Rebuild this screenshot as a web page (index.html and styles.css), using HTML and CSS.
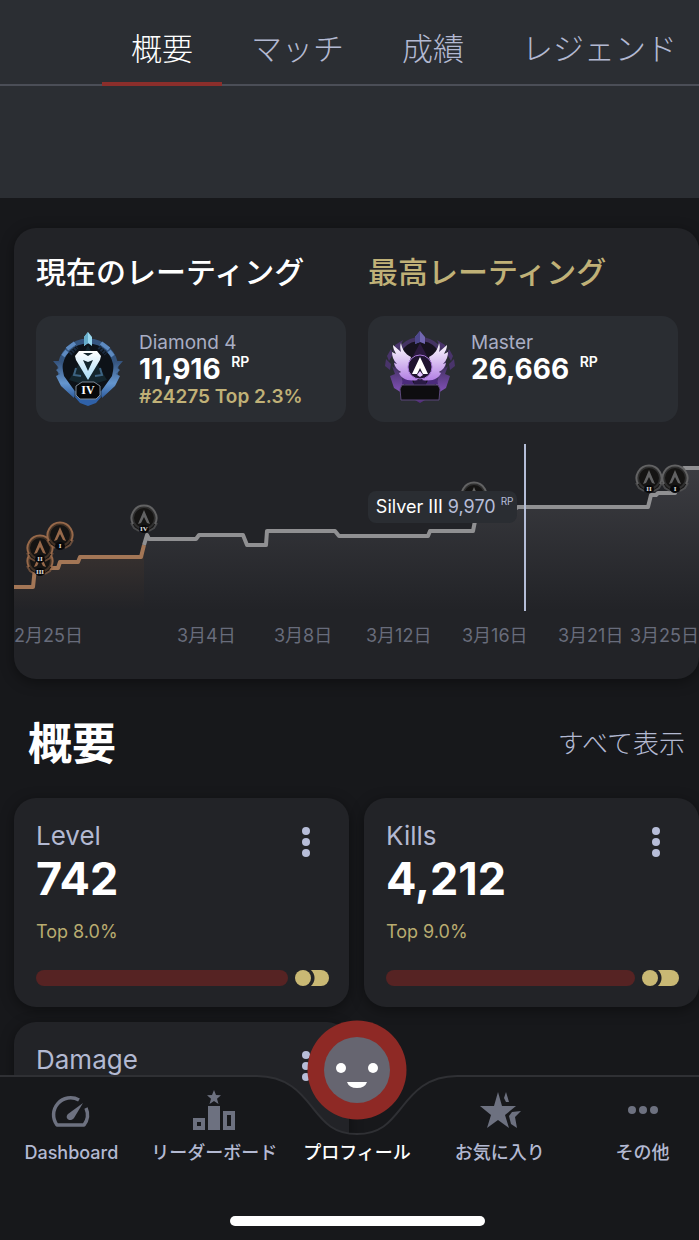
FILE: index.html
```
<!DOCTYPE html>
<html lang="ja">
<head>
<meta charset="utf-8">
<meta name="viewport" content="width=device-width, initial-scale=1">
<title>概要</title>
<link rel="stylesheet" href="styles.css">
</head>
<body>
<div class="app">
  <header class="top">
    <nav class="tabs">
      <a class="tab tab-active" href="#overview">概要</a>
      <a class="tab" href="#matches">マッチ</a>
      <a class="tab" href="#performance">成績</a>
      <a class="tab" href="#legends">レジェンド</a>
    </nav>
  </header>

  <main class="content">
    <section class="card rating">
      <div class="rating-grid">
        <div>
          <h2 class="rating-title">現在のレーティング</h2>
          <div class="rank">
            <svg class="emblem" viewBox="0 0 72 76" aria-hidden="true">
              <defs>
                <linearGradient id="dia" x1="0" y1="0" x2="0" y2="1"><stop offset="0" stop-color="#34527c"/><stop offset=".6" stop-color="#6596ce"/><stop offset="1" stop-color="#2e5da0"/></linearGradient>
                <linearGradient id="gem" x1="0" y1="0" x2="0" y2="1"><stop offset="0" stop-color="#fff"/><stop offset="1" stop-color="#a9dcf8"/></linearGradient>
              </defs>
              <circle cx="36" cy="39" r="28" fill="#0d1218" stroke="#34557f" stroke-width="5"/>
              <path d="M15 19l8-6M49 13l8 6M11 26l4-5M57 21l4 5" stroke="#5d8ac0" stroke-width="4"/>
              <path d="M18 24l7-7M47 17l7 7" stroke="#1b2b3f" stroke-width="4" stroke-dasharray="2 1"/>
              <path d="M1 31h8l3 15 10 14v8L9 56 4 46l4-2-4-4 3-2zM71 31h-8l-3 15-10 14v8l13-12 5-10-4-2 4-4-3-2z" fill="url(#dia)"/>
              <path d="M22 66l9 3h10l9-3-6 7-8 3-8-3z" fill="#2f61a8"/>
              <path d="M36 15l-8 17-11 18 13 4h12l13-4-11-18z" fill="#14262e"/>
              <path d="M24 38l-2 7 7 1M48 38l2 7-7 1" fill="none" stroke="#3d6483" stroke-width="2"/>
              <path fill-rule="evenodd" d="M27 21h18l4 5-1 4-12 20-12-20-1-4zM31 30l5 11 5-11-5 2zM31 23l5 3 5-3z" fill="url(#gem)"/>
              <path d="M36 2l4 5v9l-4-3-4 3V7z" fill="#9ad8ee"/>
              <path d="M36 2v11l-4 3V7z" fill="#67aecb"/>
              <path d="M30 52h12l6 4v9l-4 4H28l-4-4v-9z" fill="#060708" stroke="#7d8996" stroke-width="1"/>
              <text class="emblem-text" x="36" y="64" text-anchor="middle">IV</text>
            </svg>
            <div class="rank-text">
              <span class="rank-name">Diamond 4</span>
              <strong class="rank-value">11,916 <sup class="unit">RP</sup></strong>
              <span class="rank-place">#24275 Top 2.3%</span>
            </div>
          </div>
        </div>
        <div>
          <h2 class="rating-title rating-title-best">最高レーティング</h2>
          <div class="rank">
            <svg class="emblem" viewBox="0 0 72 76" aria-hidden="true">
              <defs>
                <linearGradient id="wing" x1="0" y1="0" x2="0" y2="1"><stop offset="0" stop-color="#fff"/><stop offset="1" stop-color="#b27fe4"/></linearGradient>
                <linearGradient id="pur" x1="0" y1="0" x2="0" y2="1"><stop offset="0" stop-color="#423062"/><stop offset="1" stop-color="#8452bb"/></linearGradient>
              </defs>
              <circle cx="36" cy="33" r="24" fill="#17131f" stroke="#443363" stroke-width="4"/>
              <path d="M19 10l-8 5-2 7 7-5zM7 19l-4 7 2 5 4-7zM2 29l-1 7 5 4 1-6zM53 10l8 5 2 7-7-5zM65 19l4 7-2 5-4-7zM70 29l1 7-5 4-1-6z" fill="#49346b"/>
              <path d="M8 36l8 7 4 12-2 8-8-5-4-12 5-2zM64 36l-8 7-4 12 2 8 8-5 4-12-5-2z" fill="url(#pur)"/>
              <path d="M19 49l6-4 5 9H18zM53 49l-6-4-5 9h12z" fill="#4b2b7c"/>
              <path d="M30 50h12v6H30z" fill="#2a1a45"/>
              <path d="M17 13C18 19 21 24 27 27C24 35 26 43 34 50C23 52 17 48 15 43L17 42C13 40 11 37 10 33L13 34C9 30 8 26 8 22L12 24C10 20 9 18 9 15L17 22C16 18 16 16 17 13z" fill="url(#wing)"/>
              <path d="M55 13C54 19 51 24 45 27C48 35 46 43 38 50C49 52 55 48 57 43L55 42C59 40 61 37 62 33L59 34C63 30 64 26 64 22L60 24C62 20 63 18 63 15L55 22C56 18 56 16 55 13z" fill="url(#wing)"/>
              <path d="M36 13l-7 13h14z" fill="#2c1a40"/>
              <circle cx="36" cy="37" r="12" fill="#1f1430" stroke="#a878d8" stroke-width="1"/>
              <path d="M36 27l8 17h-5l-3-6-3 6h-5z" fill="#fff"/>
              <path d="M33 45l3-4 3 4-3 2z" fill="#e3c5ff"/>
              <path d="M36 1l5 6v7l-5-2-5 2V7z" fill="#7267b2"/><path d="M36 1v11l-5 2V7z" fill="#4d478c"/>
              <path d="M31 70h10l-5 3z" fill="#542d7e"/>
              <path d="M18 55h36l2 4-1 11H17l-1-11z" fill="#0e0d10" stroke="#5b477a" stroke-width="1"/>
            </svg>
            <div class="rank-text">
              <span class="rank-name">Master</span>
              <strong class="rank-value">26,666 <sup class="unit">RP</sup></strong>
            </div>
          </div>
        </div>
      </div>

      <div class="chart">
        <svg class="chart-svg" viewBox="14 436 685 220" role="img" aria-label="RP">
          <defs>
            <linearGradient id="areaS" gradientUnits="userSpaceOnUse" x1="0" y1="467" x2="0" y2="610"><stop offset="0" stop-color="#8e8e96" stop-opacity=".24"/><stop offset="1" stop-color="#8e8e96" stop-opacity="0"/></linearGradient>
            <linearGradient id="areaB" gradientUnits="userSpaceOnUse" x1="0" y1="550" x2="0" y2="610"><stop offset="0" stop-color="#a6795a" stop-opacity=".17"/><stop offset="1" stop-color="#a6795a" stop-opacity="0"/></linearGradient>
            <symbol id="medal" viewBox="0 0 30 30">
              <circle cx="15" cy="14" r="13" fill="#151413"/>
              <circle cx="15" cy="14" r="11" fill="none" stroke="currentColor" stroke-opacity=".35" stroke-width="2"/>
              <path d="M4 20A12.500 12.500 0 1 1 26 20" fill="none" stroke="currentColor" stroke-width="2"/>
              <path d="M2 19l3 5 5 3M28 19l-3 5-5 3" fill="none" stroke="currentColor" stroke-opacity=".6" stroke-width="2"/>
              <path d="M15 6l6 14-3-1-3-6-3 6-3 1z" fill="currentColor"/>
              <ellipse cx="15" cy="25" rx="5" ry="4" fill="#08080a"/>
            </symbol>
          </defs>
          <path d="M14 587H33L35 568H58L60 562H78L80 557H141L144 545V611H14z" fill="url(#areaB)"/>
          <path d="M144 545L147 537 149 539H196L199 535H243L247 545H266L267 531H335L339 536H428L430 531H473L475 521H495L518 507H648L651 494H675L684 468H699V611H144z" fill="url(#areaS)"/>
          <path class="line line-bronze" d="M14 587H33L35 568H58L60 562H78L80 557H141L144 545"/>
          <path class="line line-silver" d="M144 545L147 535 149 539H196L199 535H243L247 545H266L267 531H335L339 536H428L430 531H473L475 521H495L518 507H648L651 495H656L658 493H675L684 468H699"/>
          <g class="medals-bronze">
            <use href="#medal" x="25" y="547" width="30" height="30"/><text class="medal-text" x="40" y="574">III</text>
            <use href="#medal" x="25" y="534" width="30" height="30"/><text class="medal-text" x="40" y="561">II</text>
            <use href="#medal" x="45" y="521" width="30" height="30"/><text class="medal-text" x="60" y="548">I</text>
          </g>
          <g class="medals-silver">
            <use href="#medal" x="129" y="504" width="30" height="30"/><text class="medal-text" x="144" y="531">IV</text>
            <use href="#medal" x="459" y="481" width="30" height="30"/>
            <use href="#medal" x="634" y="464" width="30" height="30"/><text class="medal-text" x="649" y="491">II</text>
            <use href="#medal" x="660" y="464" width="30" height="30"/><text class="medal-text" x="675" y="491">I</text>
          </g>
          <path class="cursor" d="M525 444V611"/>
          <g class="dates">
            <text x="14" y="642">2月25日</text>
            <text x="177" y="642">3月4日</text>
            <text x="274" y="642">3月8日</text>
            <text x="366" y="642">3月12日</text>
            <text x="462" y="642">3月16日</text>
            <text x="558" y="642">3月21日</text>
            <text x="630" y="642">3月25日</text>
          </g>
        </svg>
        <div class="tooltip"><span>Silver III</span><span class="tooltip-value">9,970</span><span class="tooltip-unit">RP</span></div>
      </div>
    </section>

    <div class="section-head">
      <h1 class="section-title">概要</h1>
      <a class="show-all" href="#all">すべて表示</a>
    </div>

    <section class="stats">
      <article class="card stat">
        <div class="stat-head">
          <h3 class="stat-name">Level</h3>
          <button class="kebab" type="button" aria-label="Level"><svg viewBox="0 0 10 30" class="kebab-icon"><circle cx="5" cy="4" r="4"/><circle cx="5" cy="15" r="4"/><circle cx="5" cy="26" r="4"/></svg></button>
        </div>
        <div class="stat-value">742</div>
        <div class="stat-top">Top 8.0%</div>
        <div class="meter"><span class="meter-fill"></span><span class="meter-dot"></span><span class="meter-rest" style="width:18px"></span></div>
      </article>
      <article class="card stat">
        <div class="stat-head">
          <h3 class="stat-name">Kills</h3>
          <button class="kebab" type="button" aria-label="Kills"><svg viewBox="0 0 10 30" class="kebab-icon"><circle cx="5" cy="4" r="4"/><circle cx="5" cy="15" r="4"/><circle cx="5" cy="26" r="4"/></svg></button>
        </div>
        <div class="stat-value">4,212</div>
        <div class="stat-top">Top 9.0%</div>
        <div class="meter"><span class="meter-fill"></span><span class="meter-dot"></span><span class="meter-rest" style="width:21px"></span></div>
      </article>
      <article class="card stat">
        <div class="stat-head">
          <h3 class="stat-name">Damage</h3>
          <button class="kebab" type="button" aria-label="Damage"><svg viewBox="0 0 10 30" class="kebab-icon"><circle cx="5" cy="4" r="4"/><circle cx="5" cy="15" r="4"/><circle cx="5" cy="26" r="4"/></svg></button>
        </div>
      </article>
    </section>
  </main>

  <footer class="dock">
    <div class="dock-back" aria-hidden="true">
      <span class="dock-side"></span>
      <svg class="dock-notch" viewBox="0 0 200 165">
        <path d="M0 1C30 1 44 18 55 32C67 47 76 59 100 59C124 59 133 47 145 32C156 18 170 1 200 1V165H0z" fill="#17181b"/>
        <path d="M0 1C30 1 44 18 55 32C67 47 76 59 100 59C124 59 133 47 145 32C156 18 170 1 200 1" fill="none" stroke="#2f3034" stroke-width="2"/>
      </svg>
      <span class="dock-side"></span>
    </div>
    <svg class="avatar" viewBox="0 0 100 100" aria-hidden="true">
      <circle cx="50" cy="50" r="49.500" fill="#8e2925"/>
      <circle cx="50" cy="50" r="33" fill="#666570"/>
      <circle cx="34" cy="48" r="5" fill="#fff"/><circle cx="66" cy="48" r="5" fill="#fff"/>
      <path d="M40 62h20q-2 6-10 6t-10-6z" fill="#fff"/>
    </svg>
    <nav class="dock-items">
      <a class="dock-item" href="#dashboard">
        <svg class="dock-icon" viewBox="0 0 44 44" aria-hidden="true">
          <path d="M30 10A17 17 0 0 0 8 35H35A17 17 0 0 0 37 18" fill="none" stroke="#6d7180" stroke-width="3.500" stroke-linejoin="round"/>
          <path d="M34 13L25 28C21 33 15 28 19 24z" fill="#6d7180"/>
        </svg>
        Dashboard
      </a>
      <a class="dock-item" href="#leaderboard">
        <svg class="dock-icon" viewBox="0 0 44 44" aria-hidden="true">
          <path d="M22 0l2 5 5 .3-4 3.500 1.500 5.200-4.500-3-4.500 3 1.500-5.200-4-3.500 5-.3z" fill="#6d7180"/>
          <path d="M16 16H28V40H16zM1 28H13V40H1zM5 32V36H9V32zM31 21H43V40H31zM35 25V36H39V25z" fill="#6d7180" fill-rule="evenodd"/>
        </svg>
        リーダーボード
      </a>
      <a class="dock-item dock-item-active" href="#profile"><span class="dock-icon"></span>プロフィール</a>
      <a class="dock-item" href="#favorites">
        <svg class="dock-icon" viewBox="0 0 44 44" aria-hidden="true">
          <path d="M20 2l4 14h14L27 25l4 13-11-8-11 8 4-13L2 16h14zM28 2l3 10h-3l-2-4zM34 22l9-1-6 6 2 11-6-4-2-8z" fill="#6d7180"/>
        </svg>
        お気に入り
      </a>
      <a class="dock-item" href="#more">
        <svg class="dock-icon" viewBox="0 0 44 44" aria-hidden="true"><g fill="#6d7180"><circle cx="11" cy="20" r="4"/><circle cx="22" cy="20" r="4"/><circle cx="33" cy="20" r="4"/></g></svg>
        その他
      </a>
    </nav>
    <div class="home-bar"></div>
  </footer>
</div>
</body>
</html>
```
FILE: styles.css
```
* { box-sizing: border-box; }
body {
  margin: 0;
  background: #17181b;
  color: #fff;
  font-family: Inter, "Noto Sans CJK JP", sans-serif;
}
h1, h2, h3 { margin: 0; }
a { color: inherit; text-decoration: none; }

.app {
  position: relative;
  height: 100vh;
  overflow: hidden;
}

.top {
  height: 198px;
  background: #2b2e33;
}
.tabs {
  display: flex;
  height: 86px;
  padding-left: 102px;
  border-bottom: 2px solid #4b4e57;
}
.tab {
  display: flex;
  flex: none;
  align-items: center;
  height: 86px;
  padding: 16px 29px 0;
  border-bottom: 4px solid transparent;
  font-size: 31px;
  font-weight: 300;
  line-height: 40px;
  color: #b3b9d2;
}
.tab-active {
  color: #fff;
  border-bottom-color: #8b2e2b;
}

.content { padding: 30px 0 0 14px; }
.card {
  background: #222327;
  border-radius: 22px;
  box-shadow: 0 3px 14px rgba(0, 0, 0, 0.4);
}

.rating { padding: 22px 0 23px; }
.rating-grid {
  display: grid;
  grid-template-columns: 1fr 1fr;
  gap: 22px;
  padding: 0 21px 0 22px;
}
.rating-title {
  margin-bottom: 22px;
  font-size: 30px;
  font-weight: 500;
  line-height: 44px;
  white-space: nowrap;
}
.rating-title-best { color: #c0b177; }
.rank {
  display: flex;
  align-items: flex-start;
  gap: 15px;
  height: 106px;
  padding: 14px 16px;
  border-radius: 16px;
  background: #2a2d32;
}
.emblem {
  flex: none;
  width: 72px;
  height: 76px;
}
.emblem-text {
  fill: #fff;
  font-family: "Liberation Serif", serif;
  font-size: 12px;
  font-weight: 700;
}
.rank-text {
  display: flex;
  flex-direction: column;
}
.rank-name {
  font-size: 19px;
  line-height: 25px;
  color: #a9aec4;
}
.rank-value {
  font-size: 28px;
  font-weight: 700;
  line-height: 28px;
}
.unit {
  margin-left: 4px;
  font-size: 14px;
  font-weight: 600;
  line-height: 14px;
  vertical-align: 12px;
}
.rank-place {
  font-size: 19px;
  font-weight: 600;
  line-height: 28px;
  color: #c0b177;
}

.chart {
  position: relative;
  margin-top: 14px;
}
.chart-svg {
  display: block;
  width: 100%;
}
.line {
  fill: none;
  stroke-width: 4;
  stroke-linejoin: round;
}
.line-bronze { stroke: #a37656; }
.line-silver { stroke: #909092; }
.medals-bronze { color: #97694a; }
.medals-silver { color: #626263; }
.medal-text {
  fill: #e3e3e3;
  font-family: "Liberation Serif", serif;
  font-size: 7px;
  font-weight: 700;
  text-anchor: middle;
}
.cursor {
  stroke: #b4bdd7;
  stroke-width: 2;
}
.dates {
  fill: #686c7b;
  font-size: 18px;
  font-weight: 400;
}
.tooltip {
  position: absolute;
  top: 25%;
  right: 26.5%;
  display: flex;
  gap: 5px;
  padding: 0 4px 0 8px;
  border-radius: 8px;
  background: #2a2d32;
  font-size: 18px;
  line-height: 32px;
  white-space: nowrap;
}
.tooltip-value { color: #b7bdd8; }
.tooltip-unit {
  color: #b7bdd8;
  font-size: 10px;
  line-height: 20px;
}

.section-head {
  display: flex;
  align-items: center;
  justify-content: space-between;
  padding: 33px 14px 22px 14px;
}
.section-title {
  font-size: 44px;
  font-weight: 700;
  line-height: 64px;
}
.show-all {
  font-size: 26px;
  font-weight: 300;
  line-height: 36px;
  color: #b3b9d2;
}

.stats {
  display: grid;
  grid-template-columns: 1fr 1fr;
  gap: 15px;
}
.stat {
  min-height: 209px;
  padding: 20px 20px 20px 22px;
}
.stat-head {
  display: flex;
  justify-content: space-between;
  height: 34px;
}
.stat-name {
  font-size: 26px;
  font-weight: 400;
  line-height: 36px;
  color: #b3b9d2;
}
.kebab {
  width: 30px;
  height: 46px;
  margin-right: 8px;
  padding: 9px 10px 7px;
  border: 0;
  background: none;
}
.kebab-icon {
  display: block;
  width: 10px;
  height: 30px;
  fill: #b7bdd8;
}
.stat-value {
  font-size: 45px;
  font-weight: 700;
  line-height: 54px;
}
.stat-top {
  margin-top: 12px;
  font-size: 18px;
  line-height: 28px;
  color: #b9ac70;
}
.meter {
  display: flex;
  height: 16px;
  margin-top: 24px;
}
.meter-fill {
  flex: 1;
  border-radius: 8px;
  background: #562323;
}
.meter-dot {
  width: 16px;
  margin-left: 7px;
  border-radius: 50%;
  background: #c9b874;
}
.meter-rest {
  border-radius: 0 8px 8px 0;
  background: radial-gradient(circle at -7px 50%, transparent 10px, #c9b874 11px);
}

.dock {
  position: absolute;
  right: -15px;
  bottom: 0;
  left: 0;
  height: 165px;
}
.dock-back {
  position: absolute;
  inset: 0;
  display: flex;
}
.dock-side {
  flex: 1;
  border-top: 2px solid #2f3034;
  background: #17181b;
}
.dock-notch {
  flex: none;
  width: 200px;
  height: 165px;
}
.avatar {
  position: absolute;
  top: -55px;
  left: calc(50% - 50px);
  width: 100px;
  height: 100px;
}
.dock-items {
  position: relative;
  display: grid;
  grid-template-columns: repeat(5, 1fr);
  padding-top: 15px;
}
.dock-item {
  display: flex;
  flex-direction: column;
  align-items: center;
  gap: 6px;
  font-size: 18px;
  font-weight: 500;
  line-height: 26px;
  white-space: nowrap;
  color: #b3b9d2;
}
.dock-item-active { color: #fff; }
.dock-icon {
  width: 44px;
  height: 44px;
}
.home-bar {
  position: absolute;
  bottom: 14px;
  left: calc(50% - 127px);
  width: 255px;
  height: 10px;
  border-radius: 5px;
  background: #fff;
}
```
